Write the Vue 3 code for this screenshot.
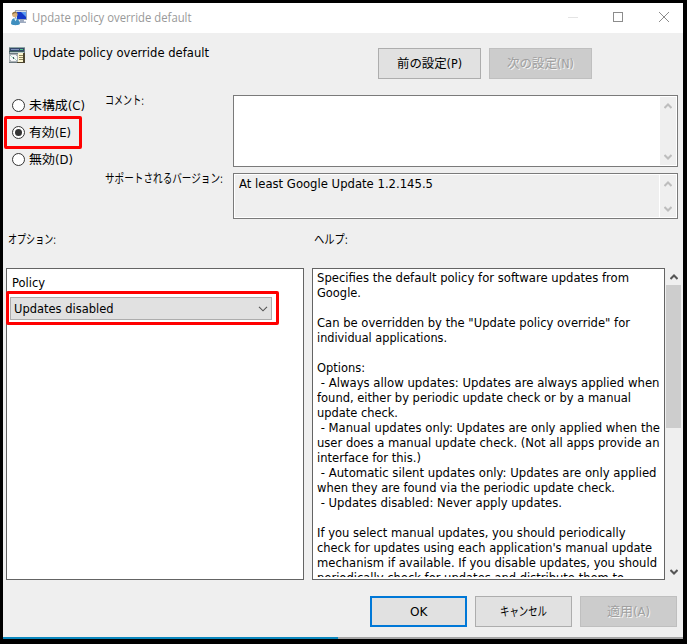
<script setup>
import { ref } from 'vue'

const state = ref('enabled')

const radios = [
  { id: 'none', label: '未構成(C)', width: 56 },
  { id: 'enabled', label: '有効(E)', width: 42 },
  { id: 'disabled', label: '無効(D)', width: 44 },
]

const helpLines = [
  ['Specifies the default policy for software updates from', 312],
  ['Google.', 44],
  ['', 0],
  ['Can be overridden by the "Update policy override" for', 313],
  ['individual applications.', 130],
  ['', 0],
  ['Options:', 48],
  [' - Always allow updates: Updates are always applied when', 342.5],
  ['found, either by periodic update check or by a manual', 314],
  ['update check.', 81],
  [' - Manual updates only: Updates are only applied when the', 343],
  ['user does a manual update check. (Not all apps provide an', 342.5],
  ['interface for this.)', 104],
  [' - Automatic silent updates only: Updates are only applied', 339.5],
  ['when they are found via the periodic update check.', 298],
  [' - Updates disabled: Never apply updates.', 245],
  ['', 0],
  ['If you select manual updates, you should periodically', 308.5],
  ["check for updates using each application's manual update", 335],
  ['mechanism if available. If you disable updates, you should', 340],
  ['periodically check for updates and distribute them to', 307],
]

// Fits a text run to a width by stretching or condensing its glyphs.
const vFit = {
  mounted(el, { value }) {
    if (!value) return
    const natural = el.getBoundingClientRect().width
    el.style.transform = `scaleX(${value / natural})`
    el.style.marginRight = `${value - natural}px`
  },
}
</script>

<template>
  <div class="screen">
    <div class="window">
      <header class="titlebar">
        <svg class="app-icon" width="17" height="16" viewBox="0 0 17 16">
          <rect x="4.500" y=".5" width="11" height="9" fill="#d8dde6" stroke="#9aa6bb" />
          <rect x="6" y="2" width="9" height="7" fill="#1238c8" />
          <path d="M10 2h5v5z" fill="#5b9bf0" />
          <path d="M9 10h4v1.500h2V13H8z" fill="#9eabc0" />
          <circle cx="3.800" cy="4.500" r="2.700" fill="#d8b17a" />
          <path d="M1.200 4.500C1 1 6 .8 6.300 3.500L4 3z" fill="#8b7040" />
          <path d="M0 14c0-4 1.500-6 4-6s4.500 2 5 6c-2 1.600-7 1.600-9 0z" fill="#3f8fbf" />
          <path d="M3 8.200l1.500 3 1.500-2.500z" fill="#e9f3f8" />
        </svg>
        <span class="title"><span v-fit="159.500" class="run">Update policy override default</span></span>
        <svg class="controls" width="104" height="12" viewBox="0 0 104 12" fill="none">
          <path d="M0 6.500h10" stroke="#e4e4e4" />
          <rect x="45.500" y="1.500" width="9" height="9" stroke="#8c8c8c" />
          <path d="M91 1l10 10M101 1L91 11" stroke="#8c8c8c" />
        </svg>
      </header>

      <section class="heading">
        <svg class="policy-icon" width="16" height="16" viewBox="0 0 16 16" shape-rendering="crispEdges">
          <path d="M0 0h16v16H0z" fill="#6d7a80" />
          <path d="M0 0h16v1H0z" fill="#8fa6a6" />
          <path d="M1 1h14v3H1z" fill="#34476a" />
          <path d="M2 2h8v1H2z" fill="#7d92bd" />
          <path d="M11 2h3v1h-3z" fill="#52c58b" />
          <path d="M0 4h15v1H0z" fill="#3d5f5f" />
          <path d="M1 5h14v1H1z" fill="#b9c9c9" />
          <path d="M0 7h9v8H0z" fill="#a9b0b4" />
          <circle cx="4.500" cy="11" r="3.500" fill="#f5f6f7" />
          <path d="M2 9l2 2M5 11l2 2" stroke="#9edcbc" />
          <circle cx="4.500" cy="11" r="1" fill="#4b5660" />
          <path d="M9 6h5v9H9z" fill="#fbf5cf" />
          <path d="M10 8h4M10 10h4M10 12h4" stroke="#8f845b" />
          <path d="M14 6h2v10H8v-1h6z" fill="#4d452f" />
        </svg>
        <h1><span v-fit="176" class="run">Update policy override default</span></h1>
        <div class="nav">
          <button class="btn"><span v-fit="65" class="run">前の設定(P)</span></button>
          <button class="btn off"><span v-fit="67" class="run">次の設定(N)</span></button>
        </div>
      </section>

      <section class="settings">
        <div class="radios">
          <div v-for="r in radios" :key="r.id" class="radio" :class="{ marked: r.id === 'enabled' }" @click="state = r.id">
            <svg width="13" height="13" viewBox="0 0 13 13">
              <circle cx="6.500" cy="6.500" r="6" fill="#fff" stroke="#333" />
              <circle v-if="state === r.id" cx="6.500" cy="6.500" r="3.500" fill="#333" />
            </svg>
            <span v-fit="r.width" class="run">{{ r.label }}</span>
          </div>
        </div>
        <div class="labels">
          <div class="label comment"><span v-fit="39" class="run">コメント:</span></div>
          <div class="label"><span v-fit="118" class="run">サポートされるバージョン:</span></div>
        </div>
        <div class="fields">
          <div class="field memo">
            <div class="text"></div>
            <div class="bar">
              <svg width="8" height="6" viewBox="0 0 8 6"><path d="M.5 5L4 1.500 7.500 5" /></svg>
              <svg width="8" height="6" viewBox="0 0 8 6"><path d="M.5 1L4 4.500 7.500 1" /></svg>
            </div>
          </div>
          <div class="field readonly">
            <div class="text"><span v-fit="194" class="run">At least Google Update 1.2.145.5</span></div>
            <div class="bar">
              <svg width="8" height="6" viewBox="0 0 8 6"><path d="M.5 5L4 1.500 7.500 5" /></svg>
              <svg width="8" height="6" viewBox="0 0 8 6"><path d="M.5 1L4 4.500 7.500 1" /></svg>
            </div>
          </div>
        </div>
      </section>

      <section class="captions">
        <div class="options-caption"><span v-fit="48" class="run">オプション:</span></div>
        <div><span v-fit="34" class="run">ヘルプ:</span></div>
      </section>

      <section class="panes">
        <div class="pane options">
          <div class="policy"><span v-fit="33" class="run">Policy</span></div>
          <div class="highlight">
            <div class="combo">
              <span v-fit="99.500" class="run">Updates disabled</span>
              <svg width="10" height="6" viewBox="0 0 10 6"><path d="M1 .8L5 4.800 9 .8" fill="none" stroke="#555" stroke-width="1.100" /></svg>
            </div>
          </div>
        </div>
        <div class="pane help">
          <div class="help-clip">
            <div v-for="(line, i) in helpLines" :key="i" class="line"><span v-fit="line[1]" class="run">{{ line[0] }}</span></div>
          </div>
        </div>
        <div class="scroll">
          <svg width="8" height="6" viewBox="0 0 8 6"><path d="M.5 5L4 1.500 7.500 5" /></svg>
          <div class="thumb"></div>
          <svg class="down" width="8" height="6" viewBox="0 0 8 6"><path d="M.5 1L4 4.500 7.500 1" /></svg>
        </div>
      </section>

      <footer class="actions">
        <button class="btn primary"><span v-fit="17.500" class="run">OK</span></button>
        <button class="btn"><span v-fit="47" class="run">キャンセル</span></button>
        <button class="btn off"><span v-fit="43" class="run">適用(A)</span></button>
      </footer>
      <div class="strip"></div>
    </div>
  </div>
</template>

<style>
body { margin: 0; background: #000; overflow: hidden; }
</style>

<style scoped>
* { box-sizing: border-box; }
.screen {
  width: 687px; height: 644px; padding: 3px 4px 5px 3px; background: #000;
  font: 12.5px/15px "DejaVu Sans Condensed", "Noto Sans CJK JP", sans-serif; color: #000;
}
.window { width: 680px; height: 636px; background: #efefef; display: flex; flex-direction: column; }
.run { display: inline-block; white-space: pre; transform-origin: 0 50%; vertical-align: top; }

.titlebar { height: 30px; flex: none; background: #fff; display: flex; align-items: center; padding: 0 11px 0 8px; }
.title { margin-left: 4px; flex: 1; font: 12px/16px "Open Sans", sans-serif; color: #999; }
.controls { margin-top: -2px; }

.heading { height: 62px; flex: none; display: flex; align-items: flex-start; padding: 15px 0 0 6px; }
.policy-icon { flex: none; margin-top: -1px; }
h1 { width: 345px; margin: -3px 0 0 8px; font: inherit; }
.nav { display: flex; gap: 8px; }
.btn {
  width: 97px; height: 31px; padding: 0; border: 1px solid #adadad; background: #e1e1e1;
  font: inherit; color: #000;
  display: flex; align-items: center; justify-content: center;
}
.nav .btn { width: 103px; }
.btn.off { background: #ccc; border-color: #bfbfbf; color: #a0a0a0; text-shadow: 1px 1px 0 #f4f4f4; }
.btn.primary { border: 2px solid #0078d7; }

.settings { height: 125px; flex: none; display: flex; }
.radios { width: 102px; display: flex; flex-direction: column; padding: 0 0 0 1px; }
.radio { height: 21px; width: 90px; display: flex; align-items: center; gap: 4px; padding-left: 8px; }
.radio.marked { width: 78px; height: 33px; border: 3px solid #f00; border-radius: 2px; padding-left: 5px; }
.labels { width: 128px; }
.label { height: 15px; margin-top: 63px; }
.label.comment { margin-top: -2px; }
.fields { display: flex; flex-direction: column; gap: 6px; }
.field { width: 445px; border: 1px solid #7a7a7a; background: #fff; padding: 1px; display: flex; }
.memo { height: 72px; }
.readonly { height: 46px; }
.text { flex: 1; padding: 1px 0 0 4px; }
.readonly .text { background: #efefef; margin-right: 1px; }
.bar { width: 16px; background: #efefef; display: flex; flex-direction: column; justify-content: space-between; align-items: center; padding: 6px 0 5px; }
.bar path { fill: none; stroke: #bdbdbd; stroke-width: 2; }

.captions { display: flex; height: 48px; flex: none; padding: 12px 0 0 5px; }
.options-caption { width: 306px; }
.panes { display: flex; height: 312px; flex: none; padding-left: 3px; }
.pane { border: 1px solid #646464; background: #fff; }
.options { width: 298px; padding-top: 6px; }
.policy { padding-left: 5px; height: 16px; }
.highlight { width: 273px; height: 34px; border: 3px solid #f00; border-radius: 2px; margin-left: -1px; padding: 3px 0 0 1px; }
.combo { width: 262px; height: 23px; border: 1px solid #adadad; background: #e1e1e1; display: flex; align-items: center; justify-content: space-between; padding: 0 3px; }
.help { width: 353px; margin-left: 8px; padding: 1px 0 1px 4px; }
.help-clip { height: 307px; overflow: hidden; }
.line { height: 15px; white-space: pre; }
.scroll { width: 15px; margin-left: 1px; display: flex; flex-direction: column; align-items: center; padding: 6px 0 5px; }
.scroll path { fill: none; stroke: #555; stroke-width: 2; }
.thumb { width: 15px; height: 143px; background: #cdcdcd; margin-top: 5px; }
.down { margin-top: auto; }

.actions { display: flex; gap: 8px; padding: 16px 0 0 367px; height: 57px; flex: none; }
.strip { height: 2px; background: linear-gradient(90deg, #0a87bd 335px, #a5a5a5 335px); }
</style>
